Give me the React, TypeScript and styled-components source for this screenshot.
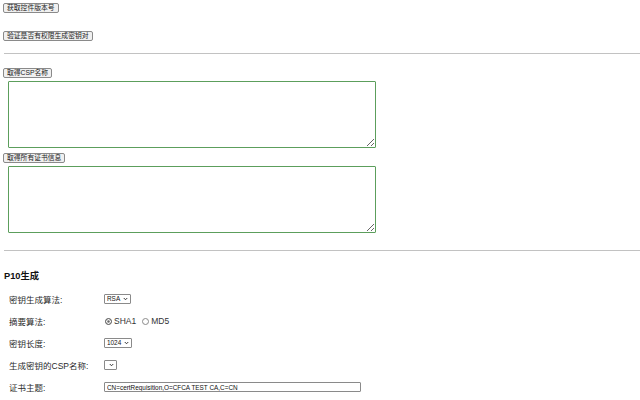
import React from 'react';
import styled, { createGlobalStyle } from 'styled-components';

const GlobalStyle = createGlobalStyle`
  html, body {
    margin: 0;
    padding: 0;
    background: #fff;
  }
  body {
    font-family: "Liberation Sans", "Noto Sans CJK SC", Arial, sans-serif;
    color: #222;
  }
`;

const Page = styled.div`
  width: 640px;
  height: 400px;
  overflow: hidden;
  padding: 3px 0 0 3px;
  box-sizing: border-box;
`;

const ActionButton = styled.button<{ $top?: number }>`
  display: block;
  margin: ${(p) => p.$top ?? 0}px 0 0 0;
  height: 10px;
  padding: 0 3px;
  font-family: "Liberation Sans", "Noto Sans CJK SC", sans-serif;
  font-size: 6.8px;
  line-height: 8px;
  color: #222;
  background: #f0f0f0;
  border: 1px solid #8a8a8a;
  border-radius: 2px;
  white-space: nowrap;
`;

const Divider = styled.hr<{ $top: number }>`
  margin: ${(p) => p.$top}px 0 0 1px;
  border: 0;
  border-top: 1px solid #c2c2c2;
  height: 0;
`;

const TextBox = styled.textarea`
  display: block;
  margin: 3px 0 0 5px;
  width: 368px;
  height: 67px;
  box-sizing: border-box;
  border: 1px solid #5c9e5c;
  border-radius: 1px;
  resize: both;
  outline: none;
`;

const Title = styled.h3`
  margin: 20px 0 0 1px;
  font-size: 9.3px;
  line-height: 11px;
  font-weight: bold;
  color: #111;
`;

const Form = styled.div`
  display: grid;
  grid-template-columns: 95px auto;
  grid-auto-rows: 22px;
  align-items: center;
  margin: 6px 0 0 6px;
`;

const Label = styled.span`
  font-size: 8.5px;
  color: #2a2a2a;
  white-space: nowrap;
`;

const Control = styled.div`
  display: flex;
  align-items: center;
`;

const SelectFrame = styled.span`
  display: inline-flex;
  align-items: center;
  height: 10px;
  box-sizing: border-box;
  padding: 0 2px 0 2px;
  border: 1px solid #8a8a8a;
  border-radius: 1px;
  background: #fff;
`;

const NativeSelect = styled.select`
  appearance: none;
  -webkit-appearance: none;
  border: 0;
  padding: 0;
  margin: 0;
  height: 8px;
  line-height: 8px;
  background: transparent;
  font-family: "Liberation Sans", sans-serif;
  font-size: 6.4px;
  color: #111;
  outline: none;
`;

const Chevron = styled.svg`
  width: 5px;
  height: 4px;
  margin-left: 2px;
  flex: none;
`;

const RadioGroup = styled.label`
  display: flex;
  align-items: center;
  margin-right: 5px;
  font-size: 8.5px;
  color: #333;
`;

const Radio = styled.input`
  appearance: none;
  -webkit-appearance: none;
  width: 7px;
  height: 7px;
  box-sizing: border-box;
  margin: 0 2px 0 1px;
  border: 1px solid #8a8a8a;
  border-radius: 50%;
  background: #fff;
  &:checked {
    border-color: #666;
    box-shadow: inset 0 0 0 1.2px #fff;
    background: #666;
  }
`;

const SubjectInput = styled.input`
  width: 257px;
  height: 10px;
  box-sizing: border-box;
  padding: 0 2px;
  font-family: "Liberation Sans", sans-serif;
  font-size: 6.4px;
  color: #111;
  border: 1px solid #8a8a8a;
  border-radius: 1px;
  outline: none;
`;

const Dropdown = ({ options, value }: { options: string[]; value?: string }) => (
  <SelectFrame>
    <NativeSelect defaultValue={value}>
      {options.map((o) => (
        <option key={o}>{o}</option>
      ))}
    </NativeSelect>
    <Chevron viewBox="0 0 10 8">
      <path d="M1.5 2 L5 5.5 L8.5 2" fill="none" stroke="#222" strokeWidth="1.8" />
    </Chevron>
  </SelectFrame>
);

export default function App() {
  return (
    <>
      <GlobalStyle />
      <Page>
        <ActionButton>获取控件版本号</ActionButton>
        <ActionButton $top={18}>验证是否有权限生成密钥对</ActionButton>
        <Divider $top={12} />
        <ActionButton $top={14}>取得CSP名称</ActionButton>
        <TextBox />
        <ActionButton $top={5}>取得所有证书信息</ActionButton>
        <TextBox />
        <Divider $top={17} />
        <Title>P10生成</Title>
        <Form>
          <Label>密钥生成算法:</Label>
          <Control>
            <Dropdown options={['RSA', 'SM2']} value="RSA" />
          </Control>

          <Label>摘要算法:</Label>
          <Control>
            <RadioGroup>
              <Radio type="radio" name="hash" defaultChecked />
              SHA1
            </RadioGroup>
            <RadioGroup>
              <Radio type="radio" name="hash" />
              MD5
            </RadioGroup>
          </Control>

          <Label>密钥长度:</Label>
          <Control>
            <Dropdown options={['1024', '2048']} value="1024" />
          </Control>

          <Label>生成密钥的CSP名称:</Label>
          <Control>
            <Dropdown options={[]} />
          </Control>

          <Label>证书主题:</Label>
          <Control>
            <SubjectInput defaultValue="CN=certRequisition,O=CFCA TEST CA,C=CN" />
          </Control>
        </Form>
      </Page>
    </>
  );
}
